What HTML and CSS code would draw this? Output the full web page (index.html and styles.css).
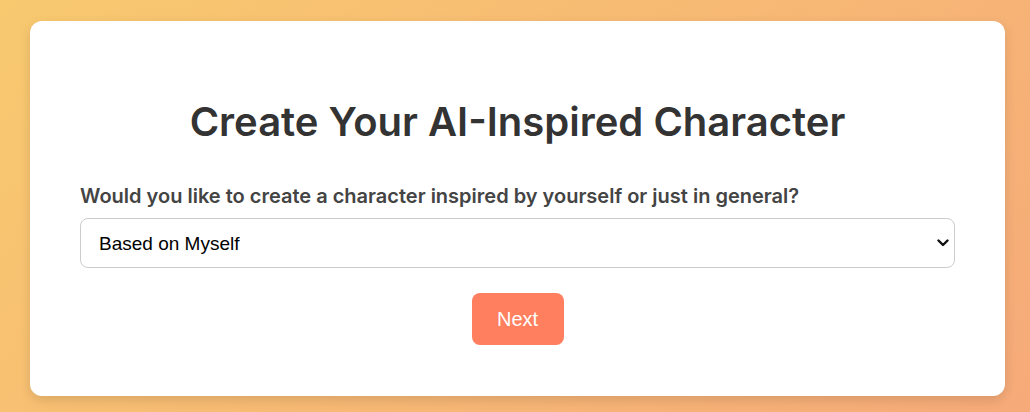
FILE: index.html
```html
<!DOCTYPE html>
<html>
<head>
<meta charset="utf-8">
<link rel="stylesheet" href="styles.css">
</head>
<body>
<div class="page">
  <div class="card">
    <h1 class="title">Create Your AI-Inspired Character</h1>
    <label class="label" for="kind">Would you like to create a character inspired by yourself or just in general?</label>
    <div class="select-wrap">
      <select id="kind" class="select">
        <option>Based on Myself</option>
        <option>In General</option>
      </select>
      <svg class="chev" width="12" height="8" viewBox="0 0 12 8" aria-hidden="true">
        <path d="M1.5 1.5 L6 6 L10.5 1.5" fill="none" stroke="#111" stroke-width="2.4" stroke-linecap="round" stroke-linejoin="round"/>
      </svg>
    </div>
    <div class="actions">
      <button class="btn">Next</button>
    </div>
  </div>
</div>
</body>
</html>
```
FILE: styles.css
```css
html, body {
  margin: 0;
  height: 100%;
}
body {
  background: linear-gradient(135deg, #f8c96f 0%, #f6aa79 100%);
  font-family: Inter, "Liberation Sans", sans-serif;
  overflow: hidden;
}
.page {
  padding: 21px 25px 0 30px;
}
.card {
  background: #fff;
  border-radius: 12px;
  box-shadow: 0 4px 12px rgba(0, 0, 0, 0.12);
  height: 375px;
  box-sizing: border-box;
  padding: 77px 50px 0;
  display: flex;
  flex-direction: column;
}
.title {
  margin: 0 0 38px;
  text-align: center;
  font-size: 40px;
  font-weight: 600;
  color: #333;
  line-height: 48px;
}
.label {
  font-size: 20px;
  font-weight: 600;
  color: #444;
  line-height: 24px;
  margin-bottom: 10px;
}
.select-wrap {
  position: relative;
  display: flex;
}
.select {
  flex: 1;
  -webkit-appearance: none;
  appearance: none;
  height: 50px;
  border: 1px solid #ccc;
  border-radius: 8px;
  padding: 0 13px 0 18px;
  font-family: "Liberation Sans", Arial, sans-serif;
  font-size: 19px;
  color: #000;
  background: #fff;
}
.chev {
  position: absolute;
  right: 6px;
  top: 21px;
  pointer-events: none;
}
.actions {
  display: flex;
  justify-content: center;
  margin-top: 25px;
}
.btn {
  width: 92px;
  height: 52px;
  border: none;
  border-radius: 8px;
  background: #ff7f5f;
  color: #fff;
  font-family: "Liberation Sans", Arial, sans-serif;
  font-size: 20px;
}
```
